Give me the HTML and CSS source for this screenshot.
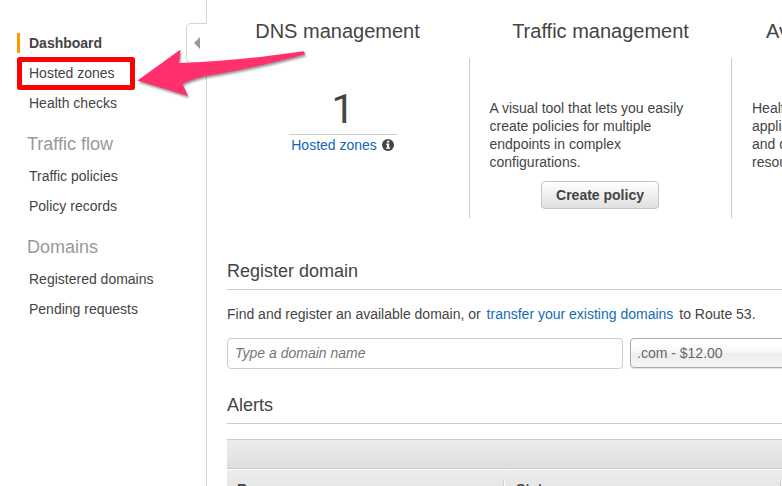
FILE: index.html
```html
<!DOCTYPE html>
<html lang="en">
<head>
<meta charset="utf-8">
<title>Route 53 Dashboard</title>
<link rel="stylesheet" href="styles.css">
</head>
<body>
<div class="app">
  <nav class="sidebar">
    <ul class="nav-list">
      <li class="nav-item active">Dashboard</li>
      <li class="nav-item">Hosted zones</li>
      <li class="nav-item">Health checks</li>
    </ul>
    <h3 class="nav-heading">Traffic flow</h3>
    <ul class="nav-list">
      <li class="nav-item">Traffic policies</li>
      <li class="nav-item">Policy records</li>
    </ul>
    <h3 class="nav-heading">Domains</h3>
    <ul class="nav-list">
      <li class="nav-item">Registered domains</li>
      <li class="nav-item">Pending requests</li>
    </ul>
    <div class="collapse-tab">
      <svg width="6" height="12" viewBox="0 0 6 12"><path d="M6 0v12L0 6z" fill="#999"/></svg>
    </div>
  </nav>
  <main class="content">
    <section class="cards">
      <article class="card">
        <h2 class="card-title">DNS management</h2>
        <div class="card-body count-body">
          <div class="count">
            <div class="count-value">1</div>
            <div class="count-label"><a class="link">Hosted zones</a>
              <svg class="info" width="12" height="12" viewBox="0 0 12 12"><circle cx="6" cy="6" r="6" fill="#444"/><path d="M5 1.7h2.2v1.8H5zM4.2 4.6h3v3.9h.9v1.3H4.1V8.5H5V5.9h-.8z" fill="#fff"/></svg>
            </div>
          </div>
        </div>
      </article>
      <article class="card">
        <h2 class="card-title">Traffic management</h2>
        <div class="card-body">
          <p class="card-text">A visual tool that lets you easily create policies for multiple endpoints in complex configurations.</p>
          <button class="button">Create policy</button>
        </div>
      </article>
      <article class="card">
        <h2 class="card-title">Availability monitoring</h2>
        <div class="card-body">
          <p class="card-text health-text">Health checks monitor your applications and web resources, and direct DNS queries to healthy resources.</p>
        </div>
      </article>
    </section>
    <h2 class="section-title">Register domain</h2>
    <p class="register-text">Find and register an available domain, or <a class="link transfer">transfer your existing domains</a> to Route 53.</p>
    <div class="register-form">
      <input class="domain-input" type="text" placeholder="Type a domain name">
      <div class="tld-select">.com - $12.00</div>
    </div>
    <h2 class="section-title alerts-title">Alerts</h2>
    <div class="table">
      <div class="toolbar"></div>
      <div class="table-head">
        <div class="cell">Resource</div>
        <div class="cell">Status</div>
      </div>
    </div>
  </main>
  <svg class="annotation" width="320" height="120" viewBox="0 0 320 120">
    <rect x="19.5" y="59.5" width="113" height="28" fill="none" stroke="#f00" stroke-width="5" stroke-linejoin="round"/>
    <path class="arrow" d="M137.500 80.500L180.500 49.500L179 63Q230 62 303 51.300Q305.500 52 304.500 54.500Q250 69 206 76Q192 79 182.500 84L188 96Z" fill="#ff306c"/>
  </svg>
</div>
</body>
</html>
```
FILE: styles.css
```css
* { box-sizing: border-box; }
body {
  margin: 0;
  overflow: hidden;
  background: #fff;
  color: #444;
  font: 14px/18px "Liberation Sans", Arial, sans-serif;
}
h2, h3, p, ul { margin: 0; padding: 0; font-weight: 400; }
.app { position: relative; display: flex; width: 782px; height: 486px; overflow: hidden; }
.sidebar {
  position: relative;
  flex: 0 0 207px;
  padding: 33px 0 0 17px;
  border-right: 1px solid #d5d5d5;
}
.nav-list { display: flex; flex-direction: column; gap: 10px; list-style: none; }
.nav-item { height: 20px; padding-left: 12px; line-height: 20px; }
.active { padding-left: 9px; border-left: 3px solid #f90; font-weight: 700; }
.nav-heading {
  margin: 19px 0 10px;
  padding-left: 10px;
  color: #999;
  font-size: 18px;
  line-height: 24px;
}
.collapse-tab {
  position: absolute;
  top: 23px;
  right: -1px;
  display: flex;
  align-items: center;
  width: 21px;
  height: 40px;
  padding-left: 7px;
  border: 1px solid #d5d5d5;
  border-right: 0;
  border-radius: 5px 0 0 5px;
  background: #fff;
}
.content { flex: 0 0 785px; padding: 18px 0 0 20px; }
.cards { display: flex; height: 200px; }
.card { flex: 0 0 262px; display: flex; flex-direction: column; }
.card:first-child { flex-basis: 243px; }
.card-title {
  height: 40px;
  padding-right: 1px;
  font-size: 20px;
  line-height: 26px;
  text-align: center;
}
.card:first-child .card-title { padding: 0; margin-left: -22px; }
.card-body {
  display: flex;
  flex-direction: column;
  align-items: center;
  height: 160px;
  padding: 41px 21px 0 19px;
  border-right: 1px solid #ccc;
}
.count-body { padding: 31px 10px 0 0; }
.count { width: 108px; text-align: center; }
.count-value {
  height: 46px;
  border-bottom: 1px solid #ccc;
  font-family: Roboto, "Liberation Sans", sans-serif;
  font-size: 41px;
  line-height: 41px;
}
.count-label { margin-left: -1px; line-height: 20px; white-space: nowrap; }
.info { margin-left: 1px; vertical-align: -0.5px; }
.link { color: #146eb4; }
.count .link { color: #1166bb; }
.card-text { width: 220px; }
.health-text { margin-left: 1px; }
.button {
  width: 118px;
  height: 28px;
  margin-top: 10px;
  padding: 0 0 0 1px;
  border: 1px solid #c5c5c5;
  border-radius: 4px;
  background: linear-gradient(#fff, #e0e0e0);
  color: #444;
  font: 700 14px "Liberation Sans", Arial, sans-serif;
}
.section-title {
  height: 31px;
  margin-top: 41px;
  border-bottom: 1px solid #ccc;
  font-size: 18px;
  line-height: 24px;
}
.register-text { margin-top: 15px; }
.transfer { margin: 0 2px; }
.register-form { display: flex; gap: 7px; margin-top: 15px; }
.domain-input {
  width: 396px;
  height: 31px;
  padding: 0 7px 2px;
  border: 1px solid #ccc;
  border-radius: 4px;
  font: 14px "Liberation Sans", Arial, sans-serif;
}
.domain-input::placeholder { color: #777; font-style: italic; }
.tld-select {
  width: 200px;
  height: 30px;
  padding-left: 6px;
  border: 1px solid #aaa;
  border-radius: 4px;
  background: linear-gradient(#fff 20%, #f6f6f6 50%, #eee 52%, #f4f4f4);
  box-shadow: 0 1px 1px #e2e2e2;
  color: #666;
  line-height: 28px;
}
.alerts-title { margin-top: 24px; }
.table { margin-top: 15px; }
.toolbar {
  height: 30px;
  border: solid #ccc;
  border-width: 1px 0;
  background: linear-gradient(#ededed, #dedede);
}
.table-head {
  display: flex;
  height: 40px;
  margin-top: 1px;
  background: linear-gradient(#ededed, #dedede);
  font-weight: 700;
}
.cell {
  width: 277px;
  height: 28px;
  margin-top: 11px;
  padding: 0 10px;
  border-right: 1px solid #ccc;
  box-shadow: 1px 0 #fff;
  line-height: 17px;
}
.cell + .cell { padding-left: 12px; }
.annotation { position: absolute; top: 0; left: 0; }
.arrow { filter: drop-shadow(1px 2px 1px rgb(0 0 0 / 40%)); }
```
